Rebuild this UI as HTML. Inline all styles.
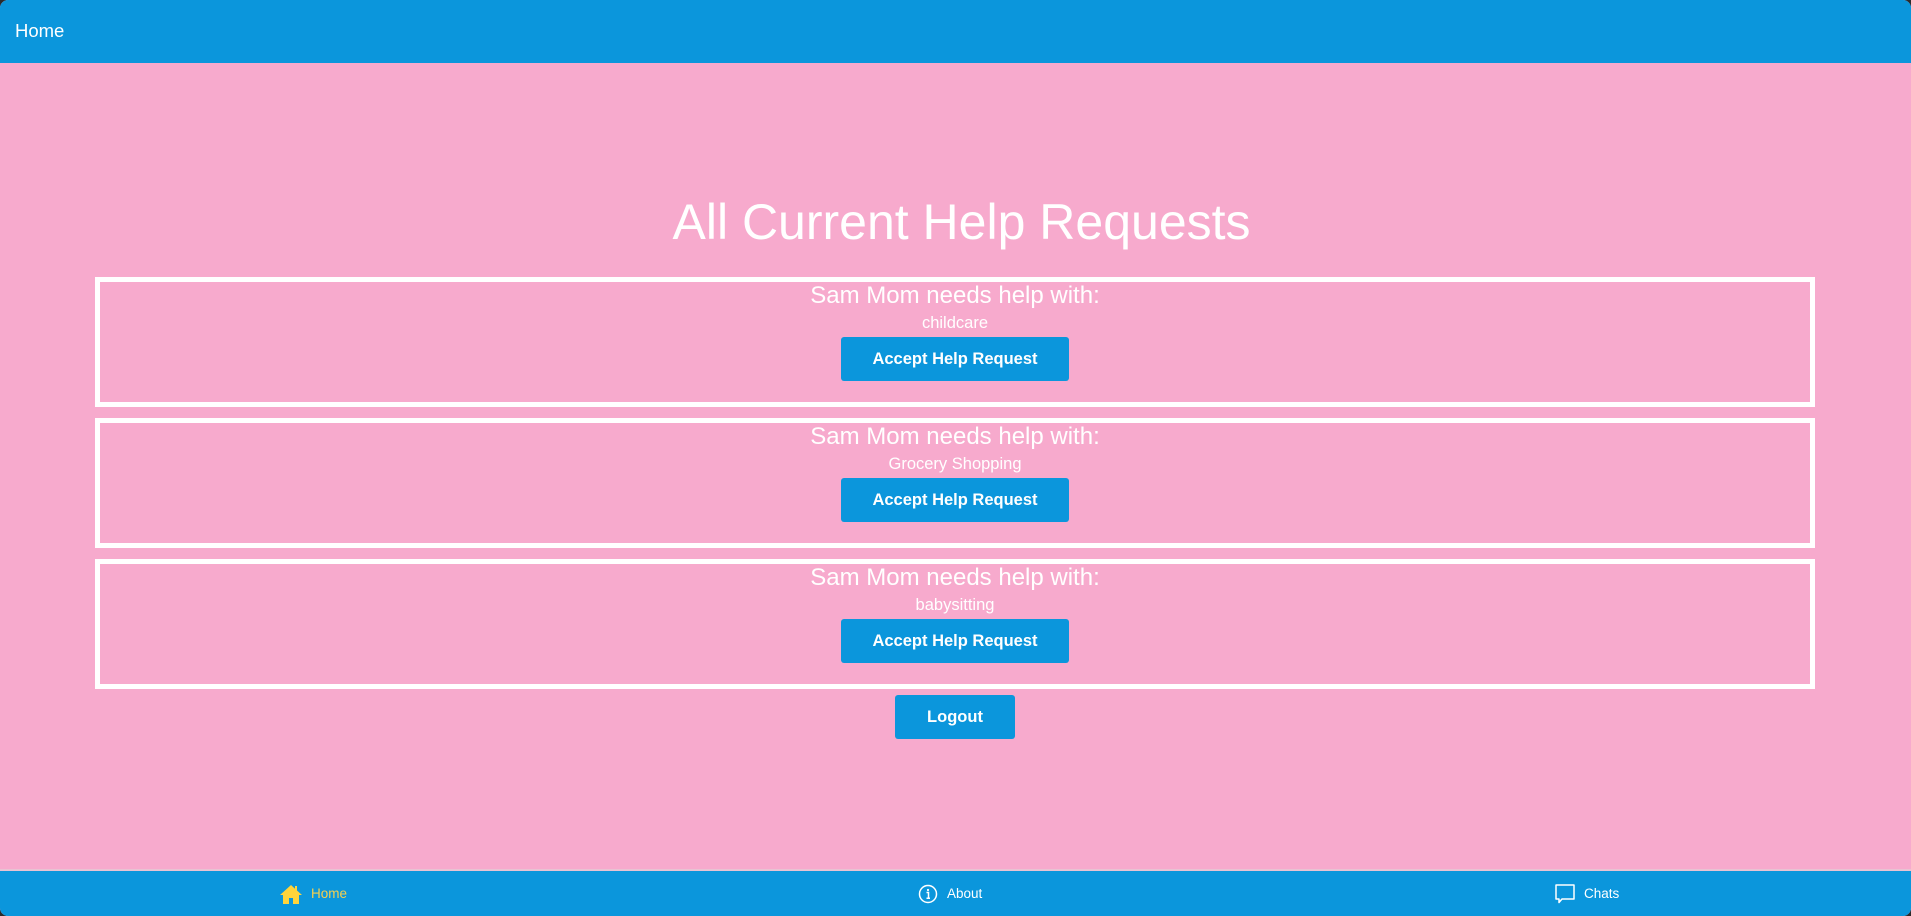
<!DOCTYPE html>
<html><head><meta charset="utf-8"><style>
html,body{margin:0;padding:0;width:1911px;height:916px;background:#2b2b2b;overflow:hidden;font-family:"Liberation Sans",Arial,sans-serif;}
#app{position:absolute;left:0;top:0;width:1911px;height:916px;background:#f7aacd;border-radius:8px;overflow:hidden;}
.hdr{position:absolute;left:0;top:0;width:100%;height:63px;background:#0b96dc;color:#fff;font-size:18.5px;line-height:62px;padding-left:15px;box-sizing:border-box;}
h1{position:absolute;top:190px;left:6px;width:100%;margin:0;text-align:center;color:#fff;font-weight:normal;font-size:50px;line-height:64px;}
.card{position:absolute;left:95px;width:1720px;height:130px;border:5px solid #fff;box-sizing:border-box;text-align:center;color:#fff;}
.card .t{font-size:24px;line-height:28px;margin-top:0px;}
.card .s{font-size:16.5px;line-height:20px;margin-top:3px;}
.btn{display:inline-block;background:#0b96dc;color:#fff;font-weight:bold;font-size:16.5px;border-radius:3px;text-align:center;}
.card .btn{width:228px;height:44px;line-height:44px;margin-top:4px;}
.logout{position:absolute;left:895px;top:695px;width:120px;height:44px;line-height:44px;}
.foot{position:absolute;left:0;top:869px;width:100%;height:47px;background:#0b96dc;border-top:2px solid #e8c3d3;box-sizing:border-box;}
.it{position:absolute;top:0;height:45px;display:flex;align-items:center;font-size:13.5px;color:#fff;}
</style></head><body><div id="app">
<div class="hdr">Home</div>
<h1>All Current Help Requests</h1>
<div class="card" style="top:277px"><div class="t">Sam Mom needs help with:</div><div class="s">childcare</div><div class="btn">Accept Help Request</div></div>
<div class="card" style="top:418px"><div class="t">Sam Mom needs help with:</div><div class="s">Grocery Shopping</div><div class="btn">Accept Help Request</div></div>
<div class="card" style="top:559px"><div class="t">Sam Mom needs help with:</div><div class="s">babysitting</div><div class="btn">Accept Help Request</div></div>
<div class="btn logout">Logout</div>
<div class="foot">
<div class="it" style="left:279px;color:#f6d04d"><svg width="24" height="20" viewBox="0 0 24 20"><path d="M12 1 L1 11 H4 V20 H10 V14 H14 V20 H20 V11 H23 L18 6.5 V2 H16 V4.7 Z" fill="#ffd43b"/></svg><span style="margin-left:8px">Home</span></div>
<div class="it" style="left:918px"><svg width="20" height="20" viewBox="0 0 20 20"><circle cx="10" cy="10" r="8.5" fill="none" stroke="#fff" stroke-width="1.5"/><circle cx="10" cy="6" r="1.1" fill="#fff"/><path d="M8.5 8.5H10.5V14M8.5 14.2H12" stroke="#fff" stroke-width="1.5" fill="none"/></svg><span style="margin-left:9px">About</span></div>
<div class="it" style="left:1554px"><svg width="22" height="22" viewBox="0 0 22 22"><path d="M2 2H20V16H8L5 19.5V16H2Z" fill="none" stroke="#fff" stroke-width="1.5" stroke-linejoin="round"/></svg><span style="margin-left:8px">Chats</span></div>
</div>
</div></body></html>
